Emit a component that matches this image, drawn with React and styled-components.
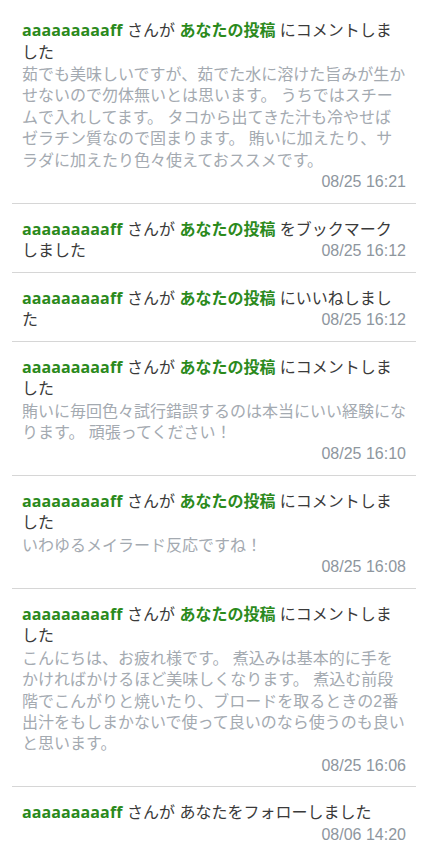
import React from "react"
import styled, { createGlobalStyle } from "styled-components"

const GlobalStyle = createGlobalStyle`
  html, body {
    margin: 0;
    padding: 0;
    background: #fff;
  }
  body {
    font-family: "Liberation Sans", "Noto Sans CJK JP", sans-serif;
    -webkit-font-smoothing: antialiased;
  }
`

const List = styled.div`
  padding: 5px 8px 0 12px;
`

const Item = styled.div`
  padding: 15px 10px 10px 10px;
  border-bottom: ${(p) => (p.last ? "none" : "1px solid #d6d6d6")};
  display: flow-root;
`

const Title = styled.div`
  font-size: 16px;
  line-height: 21.5px;
  color: #3a3a3a;
  font-family: "Liberation Sans", "Noto Sans CJK JP", sans-serif;
`

const Name = styled.span`
  color: #2b8a1c;
  font-weight: 700;
  font-family: "Open Sans", "Noto Sans CJK JP", sans-serif;
  letter-spacing: 0.1px;
`

const Link = styled.span`
  color: #2b8a1c;
  font-weight: 700;
`

const Comment = styled.div`
  margin-top: 1px;
  font-size: 16px;
  line-height: 21.4px;
  color: #a4aab1;
`

const Time = styled.span`
  float: right;
  font-size: 16px;
  line-height: 21.5px;
  color: #8e969e;
  font-family: "Liberation Sans", sans-serif;
  margin-left: 6px;
`

const items = [
  {
    action: "にコメントしました",
    comment:
      "茹でも美味しいですが、茹でた水に溶けた旨みが生かせないので勿体無いとは思います。 うちではスチームで入れしてます。 タコから出てきた汁も冷やせばゼラチン質なので固まります。 賄いに加えたり、サラダに加えたり色々使えておススメです。",
    time: "08/25 16:21",
  },
  { action: "をブックマークしました", time: "08/25 16:12" },
  { action: "にいいねしました", time: "08/25 16:12" },
  {
    action: "にコメントしました",
    comment: "賄いに毎回色々試行錯誤するのは本当にいい経験になります。 頑張ってください！",
    time: "08/25 16:10",
  },
  {
    action: "にコメントしました",
    comment: "いわゆるメイラード反応ですね！",
    time: "08/25 16:08",
  },
  {
    action: "にコメントしました",
    comment:
      "こんにちは、お疲れ様です。 煮込みは基本的に手をかければかけるほど美味しくなります。 煮込む前段階でこんがりと焼いたり、ブロードを取るときの2番出汁をもしまかないで使って良いのなら使うのも良いと思います。",
    time: "08/25 16:06",
  },
  { follow: true, time: "08/06 14:20" },
]

function Notification({ item, last }) {
  return (
    <Item last={last}>
      <Title>
        <Name>aaaaaaaaaff</Name> さんが{" "}
        {item.follow ? (
          "あなたをフォローしました"
        ) : (
          <>
            <Link>あなたの投稿</Link> {item.action}
          </>
        )}
        {!item.comment && <Time>{item.time}</Time>}
      </Title>
      {item.comment && (
        <>
          <Comment>{item.comment}</Comment>
          <Time>{item.time}</Time>
        </>
      )}
    </Item>
  )
}

export default function App() {
  return (
    <>
      <GlobalStyle />
      <List>
        {items.map((item, i) => (
          <Notification key={i} item={item} last={i === items.length - 1} />
        ))}
      </List>
    </>
  )
}
